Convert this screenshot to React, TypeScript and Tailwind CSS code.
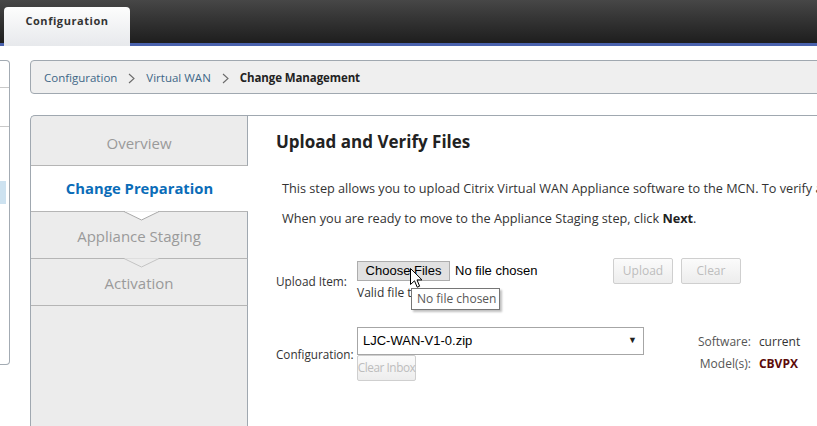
import React from "react";

function Chevron() {
  return (
    <svg width="7" height="11" viewBox="0 0 7 11" className="mx-[11px]">
      <path d="M1 1 L6 5.5 L1 10" fill="none" stroke="#6b6b6b" strokeWidth="1.1" />
    </svg>
  );
}

function NavArrow({ fill, stroke }: { fill: string; stroke: string }) {
  return (
    <svg
      width="35"
      height="10"
      viewBox="0 0 35 10"
      className="absolute left-[93px] bottom-[-10px] z-10"
    >
      <path d={`M0 0.5 L17.5 9 L35 0.5`} fill={fill} stroke={stroke} strokeWidth="1" />
      <rect x="1" y="-1" width="33" height="1.5" fill={fill} />
    </svg>
  );
}

function DisabledButton({ children, className }: { children: React.ReactNode; className: string }) {
  return (
    <div
      className={`flex items-center justify-center whitespace-nowrap border border-[#cfcfcf] rounded-[2px] bg-linear-to-b from-[#fbfbfb] to-[#ededed] text-[#bdbdbd] ${className}`}
    >
      {children}
    </div>
  );
}

export default function App() {
  return (
    <div className="w-[817px] h-[426px] overflow-hidden bg-white relative font-['Open_Sans',sans-serif] text-[#333]">
      {/* Header */}
      <div className="h-[46px] bg-linear-to-b from-[#474747] to-[#1e1e1e] border-b-[3px] border-[#4a62ad] flex items-end pl-[4px]">
        <div className="h-[39px] w-[126px] -mb-[3px] rounded-t-[4px] bg-linear-to-b from-[#fdfdfd] to-[#e7e9ec] flex justify-center pt-[6px] text-[11px] font-bold text-[#333] tracking-[0.55px]">
          Configuration
        </div>
      </div>

      {/* Body */}
      <div className="flex pt-[14px]">
        <div className="w-[10px] h-[305px] border-y border-r border-[#a3abb3] rounded-r-[4px] shrink-0 flex flex-col">
          <div className="h-[27px] border-b border-[#c9c9c9]" />
          <div className="h-[39px] border-b border-[#c9c9c9]" />
          <div className="h-[54px]" />
          <div className="h-[23px] w-[6px] bg-[#cde2f0]" />
        </div>

        <div className="ml-[20px] flex-1 min-w-0 flex flex-col">
          {/* Breadcrumb */}
          <div className="h-[34px] -mr-[10px] border border-[#a0a8b0] rounded-[4px] bg-[#efefef] flex items-center pl-[13px] pt-[2px] text-[11.5px]">
            <span className="text-[#3e6787]">Configuration</span>
            <Chevron />
            <span className="text-[#3e6787]">Virtual WAN</span>
            <Chevron />
            <span className="font-bold text-[#222] tracking-[-0.1px]">Change Management</span>
          </div>

          {/* Wizard */}
          <div className="mt-[21px] flex h-[320px]">
            <div className="w-[218px] shrink-0 border-l border-t border-[#a0a8b0] rounded-tl-[5px] bg-[#ececec] flex flex-col text-[15px]">
              <div className="h-[50px] border-r border-r-[#a0a8b0] border-b border-b-[#b5b5b5] flex items-center justify-center pt-[5px] text-[#9a9a9a]">
                Overview
              </div>
              <div className="relative h-[46px] bg-white border-b border-b-[#b5b5b5] flex items-center justify-center font-bold text-[14.8px] text-[#0a6cb8]">
                Change Preparation
                <NavArrow fill="#ffffff" stroke="#a9a9a9" />
              </div>
              <div className="relative h-[47px] border-r border-r-[#a0a8b0] border-b border-b-[#b5b5b5] flex items-center justify-center pt-[3px] text-[#9a9a9a]">
                Appliance Staging
                <NavArrow fill="#ececec" stroke="#c4c4c4" />
              </div>
              <div className="h-[47px] border-r border-r-[#a0a8b0] border-b border-b-[#b5b5b5] flex items-center justify-center pt-[2px] text-[#9a9a9a]">
                Activation
              </div>
              <div className="flex-1 border-r border-r-[#a0a8b0]" />
            </div>

            <div className="flex-1 min-w-0 border-t border-[#a0a8b0] pl-[28px]">
              <h2 className="mt-[14px] text-[17px] leading-[24px] font-bold text-[#222]">Upload and Verify Files</h2>
              <p className="ml-[6px] mt-[24px] text-[12.7px] leading-[20px] whitespace-nowrap text-[#333]">
                This step allows you to upload Citrix Virtual WAN Appliance software to the MCN. To verify and stage the software, click Next.
              </p>
              <p className="ml-[6px] mt-[10px] text-[12.7px] leading-[20px] whitespace-nowrap text-[#333]">
                When you are ready to move to the Appliance Staging step, click <b className="text-[#222]">Next</b>.
              </p>

              {/* Upload row */}
              <div className="mt-[30px] flex items-start">
                <div className="w-[81px] pt-[15px] text-[11.8px] leading-[16px] text-[#333]">Upload Item:</div>
                <div className="relative w-[256px] pt-[3px]">
                  <div className="flex items-center h-[20px] font-['Liberation_Sans',Arial,sans-serif] text-[13px] text-black">
                    <div className="h-[20px] w-[93px] border border-[#adadad] bg-[#e1e1e1] flex items-center justify-center">
                      Choose Files
                    </div>
                    <span className="ml-[5px]">No file chosen</span>
                  </div>
                  <div className="mt-[4px] text-[12px] leading-[16px] text-[#333] whitespace-nowrap">Valid file types: .zip</div>
                  {/* tooltip */}
                  <div className="absolute left-[54px] top-[30px] w-[89px] h-[22px] border border-[#767676] bg-white shadow-[2px_2px_2px_rgba(0,0,0,0.25)] text-[12px] text-[#575757] flex items-center pl-[5px] whitespace-nowrap">
                    No file chosen
                  </div>
                  {/* cursor */}
                  <svg width="13" height="21" viewBox="0 0 13 21" className="absolute left-[53px] top-[10px]">
                    <path d="M0.5 0.5 L0.5 16.5 L4.5 12.8 L7.2 19.2 L9.6 18.2 L7 11.9 L12 11.9 Z" fill="#fff" stroke="#000" strokeWidth="1" strokeLinejoin="round" />
                  </svg>
                </div>
                <DisabledButton className="w-[60px] h-[26px] text-[12px]">Upload</DisabledButton>
                <DisabledButton className="ml-[8px] w-[60px] h-[26px] text-[12px]">Clear</DisabledButton>
              </div>

              {/* Configuration row */}
              <div className="mt-[26px] flex items-start">
                <div className="w-[81px] pt-[19px] text-[11.7px] leading-[16px] text-[#333]">Configuration:</div>
                <div className="w-[287px]">
                  <div className="h-[28px] border border-[#a6a6a6] bg-white flex items-center justify-between pl-[5px] pr-[6px] font-['Liberation_Sans',Arial,sans-serif] text-[13px] text-black">
                    <span>LJC-WAN-V1-0.zip</span>
                    <span className="text-[9px] text-[#222]">▼</span>
                  </div>
                  <DisabledButton className="w-[59px] h-[26px] text-[11.8px] tracking-[-0.45px]">Clear Inbox</DisabledButton>
                </div>
                <div className="ml-[54px] mt-[4px] grid grid-cols-[auto_auto] gap-x-[8px] text-[12px] leading-[22px]">
                  <span className="text-right text-[#555]">Software:</span>
                  <span className="text-[#333]">current</span>
                  <span className="text-right text-[#555]">Model(s):</span>
                  <span className="font-bold text-[#5c0a0a]">CBVPX</span>
                </div>
              </div>
            </div>
          </div>
        </div>
      </div>
    </div>
  );
}
